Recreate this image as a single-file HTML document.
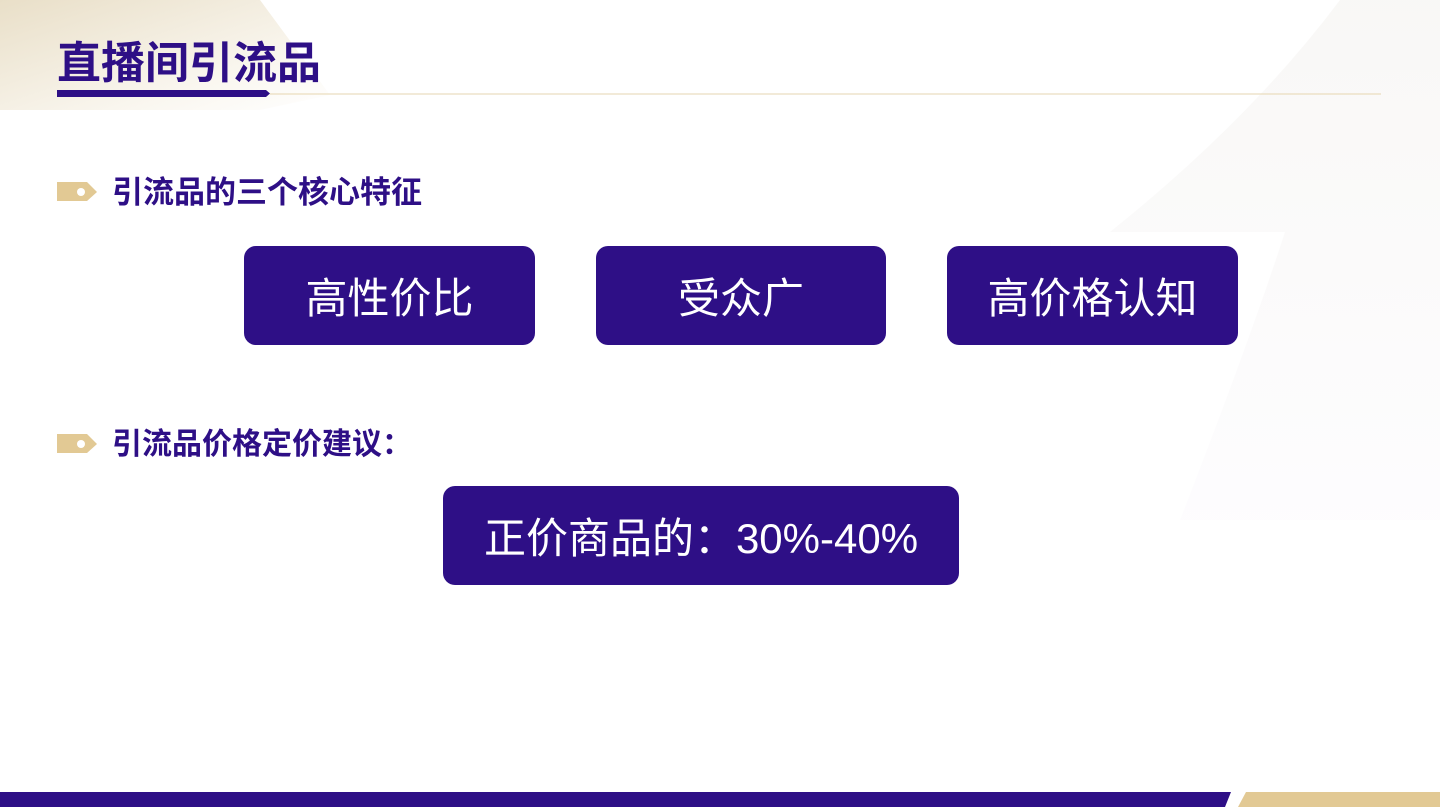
<!DOCTYPE html>
<html><head><meta charset="utf-8"><style>
html,body{margin:0;padding:0}
body{width:1440px;height:807px;position:relative;overflow:hidden;background:#fff;font-family:"Liberation Sans","Noto Sans CJK SC",sans-serif}
.abs{position:absolute}
.box{position:absolute;background:#2e0f86;border-radius:12px;color:#fff;display:flex;align-items:center;justify-content:center;font-size:42px}
.h2{position:absolute;left:112px;font-weight:bold;color:#2e0f86;line-height:34px;white-space:nowrap}
</style></head><body>
<svg class="abs" style="left:0;top:0" width="1440" height="807">
<defs>
<linearGradient id="g1" x1="0" y1="0" x2="1" y2="1"><stop offset="0" stop-color="#e9dfc8"/><stop offset="0.7" stop-color="#faf7f0"/><stop offset="1" stop-color="#fff"/></linearGradient>
<linearGradient id="g2" x1="0" y1="0" x2="0" y2="1"><stop offset="0" stop-color="#f7f6f4"/><stop offset="1" stop-color="#fdfcfe"/></linearGradient>
</defs>
<path d="M0 0 H260 L330 95 L260 110 H0Z" fill="url(#g1)"/>
<path d="M1340 0 H1440 V520 H1180 Q1250 340 1285 232 L1110 232 Q1250 120 1340 0Z" fill="url(#g2)" opacity="0.8"/>
<rect x="270" y="93.5" width="1111" height="1" fill="#e6d6b0"/>
<path d="M57 90 H266 L270 93.5 L266 97 H57Z" fill="#2e0f86"/>
<path d="M57 182 H87 L97 192 L87 201 H57Z" fill="#e2c994"/>
<circle cx="81" cy="192" r="4" fill="#fff"/>
<path d="M57 434 H87 L97 444 L87 453 H57Z" fill="#e2c994"/>
<circle cx="81" cy="444" r="4" fill="#fff"/>
<path d="M0 792 H1231 L1225 807 H0Z" fill="#2e0f86"/>
<path d="M1246 792 H1440 V807 H1238Z" fill="#e2c994"/>
</svg>
<div class="abs" style="left:57px;top:39px;font-size:44px;font-weight:bold;color:#2e0f86;line-height:50px;white-space:nowrap">直播间引流品</div>
<div class="h2" style="top:176px;font-size:31px">引流品的三个核心特征</div>
<div class="h2" style="top:428px;font-size:30px">引流品价格定价建议：</div>
<div class="box" style="left:244px;top:246px;width:291px;height:99px">高性价比</div>
<div class="box" style="left:596px;top:246px;width:290px;height:99px">受众广</div>
<div class="box" style="left:947px;top:246px;width:291px;height:99px">高价格认知</div>
<div class="box" style="left:443px;top:486px;width:516px;height:99px">正价商品的：30%-40%</div>
</body></html>
